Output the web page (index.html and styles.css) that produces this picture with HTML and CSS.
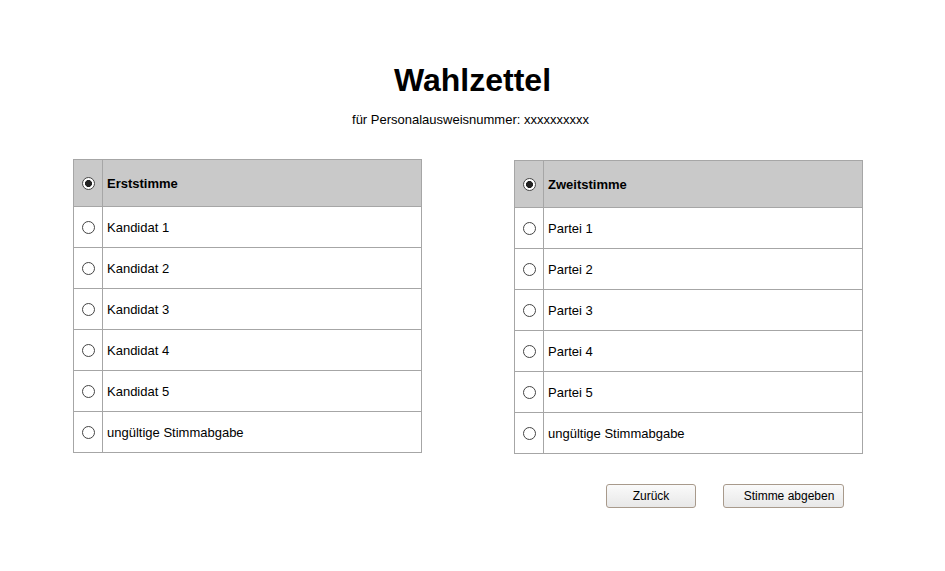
FILE: index.html
```html
<!DOCTYPE html>
<html lang="de">
<head>
    <meta charset="UTF-8">
    <title>Wahlzettel</title>
    <link rel="stylesheet" href="styles.css">
</head>
<body>

    <h1>Wahlzettel</h1>
    <p class="untertitel">für Personalausweisnummer: xxxxxxxxxx</p>

    <div class="stimmen">
        <table class="zettel">
            <tr class="kopf">
                <td class="wahl"><input type="radio" name="erst-kopf" checked></td>
                <td>Erststimme</td>
            </tr>
            <tr><td class="wahl"><input type="radio" name="erst"></td><td>Kandidat 1</td></tr>
            <tr><td class="wahl"><input type="radio" name="erst"></td><td>Kandidat 2</td></tr>
            <tr><td class="wahl"><input type="radio" name="erst"></td><td>Kandidat 3</td></tr>
            <tr><td class="wahl"><input type="radio" name="erst"></td><td>Kandidat 4</td></tr>
            <tr><td class="wahl"><input type="radio" name="erst"></td><td>Kandidat 5</td></tr>
            <tr><td class="wahl"><input type="radio" name="erst"></td><td>ungültige Stimmabgabe</td></tr>
        </table>

        <table class="zettel zweit">
            <tr class="kopf">
                <td class="wahl"><input type="radio" name="zweit-kopf" checked></td>
                <td>Zweitstimme</td>
            </tr>
            <tr><td class="wahl"><input type="radio" name="zweit"></td><td>Partei 1</td></tr>
            <tr><td class="wahl"><input type="radio" name="zweit"></td><td>Partei 2</td></tr>
            <tr><td class="wahl"><input type="radio" name="zweit"></td><td>Partei 3</td></tr>
            <tr><td class="wahl"><input type="radio" name="zweit"></td><td>Partei 4</td></tr>
            <tr><td class="wahl"><input type="radio" name="zweit"></td><td>Partei 5</td></tr>
            <tr><td class="wahl"><input type="radio" name="zweit"></td><td>ungültige Stimmabgabe</td></tr>
        </table>
    </div>

    <div class="aktionen">
        <button class="zurueck">Zurück</button>
        <button class="abgeben">Stimme abgeben</button>
    </div>

</body>
</html>
```

FILE: styles.css
```css
body {
    font-family: "Liberation Sans", Arial, sans-serif;
    background-color: white;
    color: black;
    margin: 0;
    padding: 0;
}

h1 {
    font-size: 32px;
    font-weight: bold;
    text-align: center;
    margin: 0;
    padding-top: 62px;
    line-height: 37px;
}

.untertitel {
    font-size: 13px;
    text-align: center;
    margin: 13px 0 0 -4px;
    line-height: 16px;
}

.stimmen {
    display: flex;
    align-items: flex-start;
    gap: 92px;
    padding-left: 73px;
    margin-top: 31px;
}

.zettel {
    border-collapse: collapse;
    width: 349px;
    font-size: 13px;
}

.zettel.zweit {
    margin-top: 1px;
}

.zettel td {
    border: 1px solid #a6a6a6;
    height: 40px;
    padding: 0 0 0 4px;
}

.zettel tr.kopf td {
    background-color: #c9c9c9;
    font-weight: bold;
    height: 46px;
}

.zettel td.wahl {
    width: 28px;
    padding: 0;
    text-align: center;
}

input[type="radio"] {
    appearance: none;
    width: 13px;
    height: 13px;
    margin: 0;
    border: 1px solid #444;
    border-radius: 50%;
    background-color: white;
    vertical-align: middle;
    position: relative;
    top: -1px;
}

input[type="radio"]:checked {
    background: radial-gradient(circle, #222 0 3.2px, white 3.8px);
}

.aktionen {
    display: flex;
    justify-content: flex-end;
    gap: 27px;
    padding-right: 101px;
    margin-top: 30px;
}

button {
    font-family: "Liberation Sans", Arial, sans-serif;
    font-size: 12px;
    height: 24px;
    padding: 0;
    border: 1px solid #a89a8c;
    border-radius: 3px;
    background: linear-gradient(#fafafa, #e8e8e8);
    color: black;
    cursor: pointer;
}

.zurueck {
    width: 90px;
}

.abgeben {
    width: 121px;
    padding-left: 11px;
}
```
